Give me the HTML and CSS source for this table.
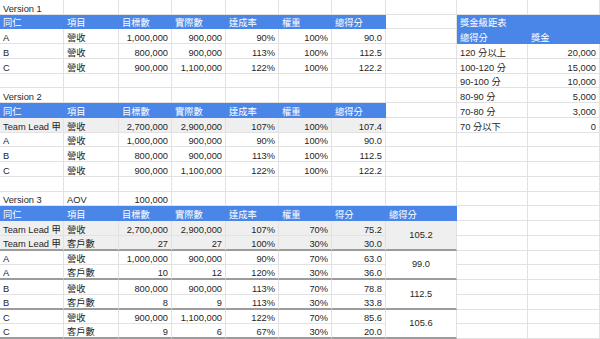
FILE: index.html
```html
<!DOCTYPE html>
<html lang="zh-Hant">
<head>
<meta charset="utf-8">
<title>Sheet</title>
<link rel="stylesheet" href="styles.css">
</head>
<body>
<div class="sheet">
  <!-- row 0 -->
  <div class="c">Version 1</div><div class="c"></div><div class="c"></div><div class="c"></div><div class="c"></div><div class="c"></div><div class="c"></div><div class="c"></div><div class="c"></div><div class="c"></div>
  <!-- row 1 -->
  <div class="c h">同仁</div><div class="c h">項目</div><div class="c h">目標數</div><div class="c h">實際數</div><div class="c h">達成率</div><div class="c h">權重</div><div class="c h">總得分</div><div class="c"></div><div class="c h">獎金級距表</div><div class="c h"></div>
  <!-- row 2 -->
  <div class="c">A</div><div class="c">營收</div><div class="c r">1,000,000</div><div class="c r">900,000</div><div class="c r">90%</div><div class="c r">100%</div><div class="c r">90.0</div><div class="c"></div><div class="c h">總得分</div><div class="c h">獎金</div>
  <!-- row 3 -->
  <div class="c">B</div><div class="c">營收</div><div class="c r">800,000</div><div class="c r">900,000</div><div class="c r">113%</div><div class="c r">100%</div><div class="c r">112.5</div><div class="c"></div><div class="c">120 分以上</div><div class="c r">20,000</div>
  <!-- row 4 -->
  <div class="c">C</div><div class="c">營收</div><div class="c r">900,000</div><div class="c r">1,100,000</div><div class="c r">122%</div><div class="c r">100%</div><div class="c r">122.2</div><div class="c"></div><div class="c">100-120 分</div><div class="c r">15,000</div>
  <!-- row 5 -->
  <div class="c"></div><div class="c"></div><div class="c"></div><div class="c"></div><div class="c"></div><div class="c"></div><div class="c"></div><div class="c"></div><div class="c">90-100 分</div><div class="c r">10,000</div>
  <!-- row 6 -->
  <div class="c">Version 2</div><div class="c"></div><div class="c"></div><div class="c"></div><div class="c"></div><div class="c"></div><div class="c"></div><div class="c"></div><div class="c">80-90 分</div><div class="c r">5,000</div>
  <!-- row 7 -->
  <div class="c h">同仁</div><div class="c h">項目</div><div class="c h">目標數</div><div class="c h">實際數</div><div class="c h">達成率</div><div class="c h">權重</div><div class="c h">總得分</div><div class="c"></div><div class="c">70-80 分</div><div class="c r">3,000</div>
  <!-- row 8 -->
  <div class="c g">Team Lead 甲</div><div class="c g">營收</div><div class="c g r">2,700,000</div><div class="c g r">2,900,000</div><div class="c g r">107%</div><div class="c g r">100%</div><div class="c g r">107.4</div><div class="c"></div><div class="c">70 分以下</div><div class="c r">0</div>
  <!-- row 9 -->
  <div class="c">A</div><div class="c">營收</div><div class="c r">1,000,000</div><div class="c r">900,000</div><div class="c r">90%</div><div class="c r">100%</div><div class="c r">90.0</div><div class="c"></div><div class="c"></div><div class="c"></div>
  <!-- row 10 -->
  <div class="c">B</div><div class="c">營收</div><div class="c r">800,000</div><div class="c r">900,000</div><div class="c r">113%</div><div class="c r">100%</div><div class="c r">112.5</div><div class="c"></div><div class="c"></div><div class="c"></div>
  <!-- row 11 -->
  <div class="c">C</div><div class="c">營收</div><div class="c r">900,000</div><div class="c r">1,100,000</div><div class="c r">122%</div><div class="c r">100%</div><div class="c r">122.2</div><div class="c"></div><div class="c"></div><div class="c"></div>
  <!-- row 12 -->
  <div class="c"></div><div class="c"></div><div class="c"></div><div class="c"></div><div class="c"></div><div class="c"></div><div class="c"></div><div class="c"></div><div class="c"></div><div class="c"></div>
  <!-- row 13 -->
  <div class="c">Version 3</div><div class="c">AOV</div><div class="c r">100,000</div><div class="c"></div><div class="c"></div><div class="c"></div><div class="c"></div><div class="c"></div><div class="c"></div><div class="c"></div>
  <!-- row 14 -->
  <div class="c h">同仁</div><div class="c h">項目</div><div class="c h">目標數</div><div class="c h">實際數</div><div class="c h">達成率</div><div class="c h">權重</div><div class="c h">得分</div><div class="c h">總得分</div><div class="c"></div><div class="c"></div>
  <!-- row 15 -->
  <div class="c g">Team Lead 甲</div><div class="c g">營收</div><div class="c g r">2,700,000</div><div class="c g r">2,900,000</div><div class="c g r">107%</div><div class="c g r">70%</div><div class="c g r">75.2</div><div class="c g m t">105.2</div><div class="c"></div><div class="c"></div>
  <!-- row 16 -->
  <div class="c g t">Team Lead 甲</div><div class="c g t">客戶數</div><div class="c g t r">27</div><div class="c g t r">27</div><div class="c g t r">100%</div><div class="c g t r">30%</div><div class="c g t r">30.0</div><div class="c"></div><div class="c"></div>
  <!-- row 17 -->
  <div class="c">A</div><div class="c">營收</div><div class="c r">1,000,000</div><div class="c r">900,000</div><div class="c r">90%</div><div class="c r">70%</div><div class="c r">63.0</div><div class="c m t">99.0</div><div class="c"></div><div class="c"></div>
  <!-- row 18 -->
  <div class="c t">A</div><div class="c t">客戶數</div><div class="c t r">10</div><div class="c t r">12</div><div class="c t r">120%</div><div class="c t r">30%</div><div class="c t r">36.0</div><div class="c"></div><div class="c"></div>
  <!-- row 19 -->
  <div class="c">B</div><div class="c">營收</div><div class="c r">800,000</div><div class="c r">900,000</div><div class="c r">113%</div><div class="c r">70%</div><div class="c r">78.8</div><div class="c m t">112.5</div><div class="c"></div><div class="c"></div>
  <!-- row 20 -->
  <div class="c t">B</div><div class="c t">客戶數</div><div class="c t r">8</div><div class="c t r">9</div><div class="c t r">113%</div><div class="c t r">30%</div><div class="c t r">33.8</div><div class="c"></div><div class="c"></div>
  <!-- row 21 -->
  <div class="c">C</div><div class="c">營收</div><div class="c r">900,000</div><div class="c r">1,100,000</div><div class="c r">122%</div><div class="c r">70%</div><div class="c r">85.6</div><div class="c m t">105.6</div><div class="c"></div><div class="c"></div>
  <!-- row 22 -->
  <div class="c t">C</div><div class="c t">客戶數</div><div class="c t r">9</div><div class="c t r">6</div><div class="c t r">67%</div><div class="c t r">30%</div><div class="c t r">20.0</div><div class="c"></div><div class="c"></div>
</div>
</body>
</html>
```

FILE: styles.css
```css
html, body {
  margin: 0;
  padding: 0;
  background: #ffffff;
}

.sheet {
  display: grid;
  width: 600px;
  height: 339px;
  overflow: hidden;
  grid-template-columns: 64px 55px 53px 54px 53px 53px 54px 71px 71px 72px;
  grid-template-rows: repeat(23, 1fr);
  font-family: "Liberation Sans", "Noto Sans CJK TC", sans-serif;
  font-size: 9.3px;
  color: #1f1f1f;
}

.c {
  box-sizing: border-box;
  display: flex;
  align-items: flex-end;
  justify-content: flex-start;
  padding: 0 3px;
  line-height: 10px;
  white-space: nowrap;
  border-right: 1px solid #e2e2e2;
  border-bottom: 1px solid #e2e2e2;
  min-width: 0;
}

.r {
  justify-content: flex-end;
}

.h {
  background: #4a86e8;
  color: #ffffff;
  border-color: #4a86e8;
}

.g {
  background: #efefef;
}

.t {
  border-bottom: 2px solid #9c9c9c;
}

.m {
  grid-row: span 2;
  align-items: center;
  justify-content: center;
}
```
